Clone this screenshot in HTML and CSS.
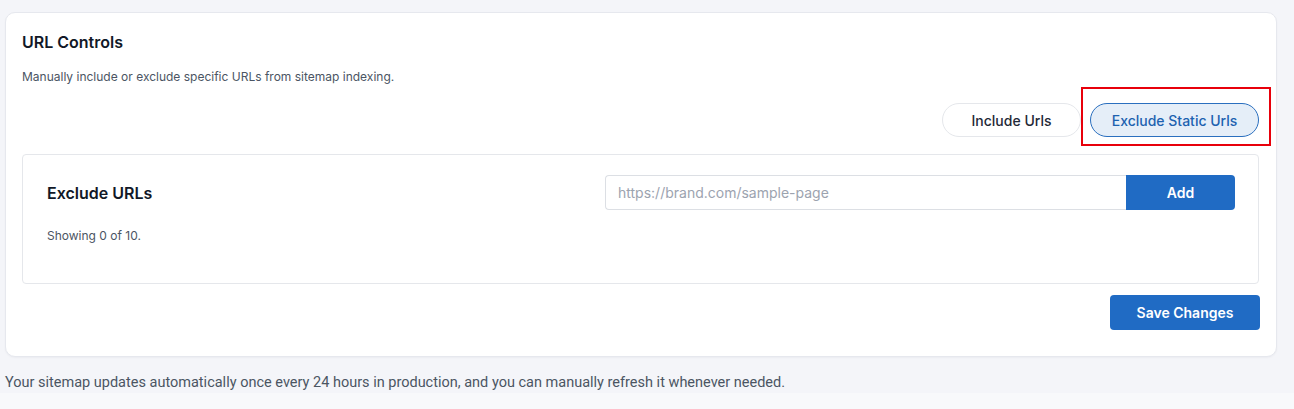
FILE: index.html
```html
<!DOCTYPE html>
<html lang="en">
<head>
<meta charset="utf-8">
<title>URL Controls</title>
<link rel="stylesheet" href="styles.css">
</head>
<body>
<div class="page">
  <section class="card">
    <h2 class="card-title">URL Controls</h2>
    <p class="card-desc">Manually include or exclude specific URLs from sitemap indexing.</p>
    <div class="tabs">
      <button class="tab">Include Urls</button>
      <div class="tab-wrap">
        <button class="tab tab-active">Exclude Static Urls</button>
        <span class="highlight"></span>
      </div>
    </div>
    <div class="panel">
      <div class="panel-head">
        <h3 class="panel-title">Exclude URLs</h3>
        <div class="add-form">
          <input class="url-input" type="text" placeholder="https://brand.com/sample-page">
          <button class="add-btn">Add</button>
        </div>
      </div>
      <p class="count">Showing 0 of 10.</p>
    </div>
    <div class="actions">
      <button class="save-btn">Save Changes</button>
    </div>
  </section>
  <p class="footer-note">Your sitemap updates automatically once every 24 hours in production, and you can manually refresh it whenever needed.</p>
</div>
</body>
</html>
```

FILE: styles.css
```css
* { box-sizing: border-box; }
html, body { margin: 0; padding: 0; }
body {
  background: #f8f9fb;
  font-family: Inter, "Noto Sans", sans-serif;
  color: #1f2937;
}
.page {
  background: #f4f5f9;
  padding: 12px 17px 0 5px;
}
.card {
  background: #fff;
  border: 1px solid #e6e8ee;
  border-radius: 10px;
  padding: 17px 17px 26px 16px;
  box-shadow: 0 1px 2px rgba(16, 24, 40, 0.04);
}
.card-title {
  margin: 0;
  font-size: 16px;
  line-height: 24px;
  font-weight: 600;
  color: #111827;
}
.card-desc {
  margin: 14px 0 0;
  font-size: 12px;
  line-height: 18px;
  color: #4b5563;
}
.tabs {
  margin-top: 17px;
  display: flex;
  justify-content: flex-end;
  gap: 9px;
}
.tab-wrap { position: relative; display: flex; }
.tab {
  height: 34px;
  width: 139px;
  padding: 0;
  border-radius: 17px;
  border: 1px solid #e5e7eb;
  background: #fff;
  font-family: inherit;
  font-size: 14px;
  font-weight: 500;
  color: #1f2937;
}
.tab-active {
  width: 169px;
  background: #e5eef8;
  border-color: #2a6fbf;
  color: #1d62b0;
}
.highlight {
  position: absolute;
  left: -9px;
  right: -12px;
  top: -16px;
  bottom: -9px;
  border: 2px solid #e8000b;
  pointer-events: none;
}
.panel {
  margin-top: 17px;
  border: 1px solid #e5e7eb;
  border-radius: 4px;
  padding: 20px 23px 38px 24px;
}
.panel-head {
  display: flex;
  align-items: center;
  justify-content: space-between;
}
.panel-title {
  margin: 0;
  font-size: 16px;
  line-height: 24px;
  font-weight: 600;
  color: #111827;
}
.add-form { display: flex; }
.url-input {
  width: 521px;
  height: 35px;
  border: 1px solid #dcdfe4;
  border-right: none;
  border-radius: 4px 0 0 4px;
  padding: 0 12px;
  font-family: inherit;
  font-size: 14px;
  color: #111827;
  outline: none;
}
.url-input::placeholder { color: #9ca3af; }
.add-btn {
  width: 109px;
  height: 35px;
  border: none;
  border-radius: 0 4px 4px 0;
  background: #206bc4;
  color: #fff;
  font-family: inherit;
  font-size: 14px;
  font-weight: 600;
}
.count {
  margin: 17px 0 0;
  font-size: 12px;
  line-height: 18px;
  color: #4b5563;
}
.actions {
  margin-top: 11px;
  display: flex;
  justify-content: flex-end;
  margin-right: -1px;
}
.save-btn {
  width: 150px;
  height: 35px;
  border: none;
  border-radius: 4px;
  background: #206bc4;
  color: #fff;
  font-family: inherit;
  font-size: 14px;
  font-weight: 600;
}
.footer-note {
  margin: 0;
  padding: 16px 0 0;
  height: 36px;
  font-family: Roboto, "Noto Sans", sans-serif;
  font-size: 14.5px;
  line-height: 20px;
  color: #4b5563;
}
```
